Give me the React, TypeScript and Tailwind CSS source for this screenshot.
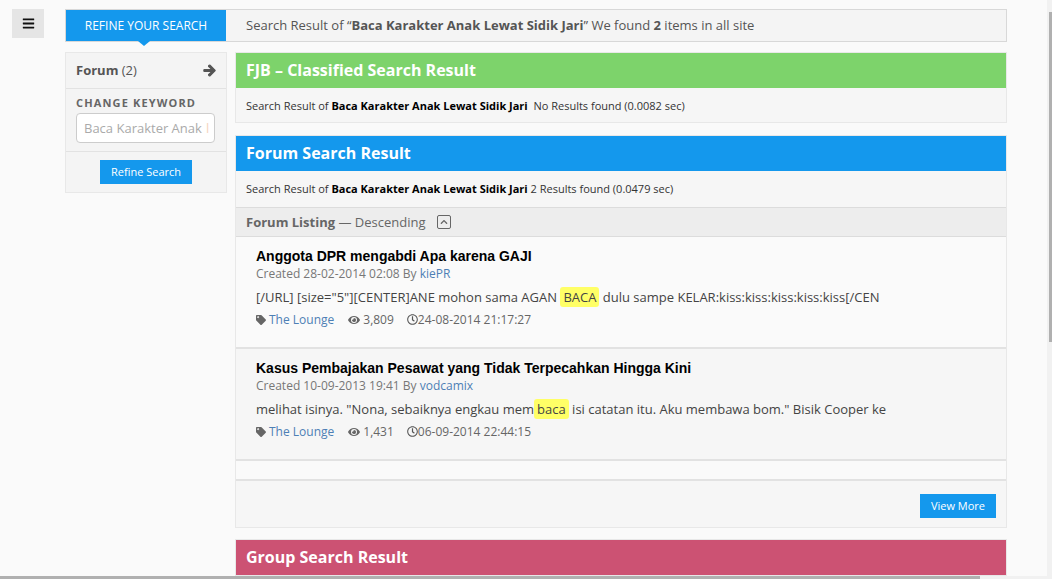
import React from 'react';
import { FaArrowRight, FaBars, FaChevronUp, FaEye, FaRegClock, FaTag } from 'react-icons/fa';

const Highlight = ({ children }: { children: React.ReactNode }) => (
  <span className="bg-[#ffff66] rounded-[3px] px-[3px] py-[1px]">{children}</span>
);

const SectionHead = ({ color, title }: { color: string; title: string }) => (
  <div className={`${color} h-[35px] flex items-center px-[10px] pb-[2px] text-white text-[16px] font-bold`}>{title}</div>
);

const Post = ({
  title,
  created,
  author,
  excerpt,
  views,
  date,
  bg,
}: {
  title: string;
  created: string;
  author: string;
  excerpt: React.ReactNode;
  views: string;
  date: string;
  bg: string;
}) => (
  <div className={`${bg} h-[112px] border-b-2 border-[#e2e2e2] pl-[20px] pt-[11px]`}>
    <div className="font-['Liberation_Sans',sans-serif] font-bold text-[14px] leading-[16px] text-black">{title}</div>
    <div className="text-[12px] leading-[17px] text-[#777] mt-[1px]">
      Created {created} By <span className="text-[#4d7fb5]">{author}</span>
    </div>
    <div className="text-[13px] leading-[18px] text-[#444] mt-[6px] whitespace-nowrap">{excerpt}</div>
    <div className="flex items-center text-[12px] leading-[17px] text-[#666] mt-[5px]">
      <FaTag className="text-[10px] text-[#666] mr-[3px]" />
      <span className="text-[#4d7fb5] mr-[14px]">The Lounge</span>
      <FaEye className="text-[12px] text-[#666] mr-[3px]" />
      <span className="mr-[13px]">{views}</span>
      <FaRegClock className="text-[11px] text-[#555]" />
      <span>{date}</span>
    </div>
  </div>
);

export default function App() {
  return (
    <div className="relative h-[579px] w-[1052px] overflow-hidden bg-[#fafafa] font-['Open_Sans',sans-serif]">
      <div className="flex pt-[9px]">
        <div className="w-[65px] shrink-0 pl-[12px]">
          <button className="w-[32px] h-[29px] bg-[#e5e5e5] flex items-center justify-center text-[#111]">
            <FaBars className="text-[13px]" />
          </button>
        </div>

        <div className="w-[942px] shrink-0">
          <div className="h-[33px] border border-[#d8d8d8] bg-[#f4f4f4] flex items-center">
            <div className="relative w-[160px] h-full bg-[#1498ed] flex items-center justify-center text-white text-[12px]">
              REFINE YOUR SEARCH
              <div className="absolute left-[72px] top-full w-0 h-0 border-x-[6px] border-x-transparent border-t-[5px] border-t-[#1498ed]" />
            </div>
            <div className="pl-[20px] text-[13px] text-[#555]">
              Search Result of “<b>Baca Karakter Anak Lewat Sidik Jari</b>” We found <b>2</b> items in all site
            </div>
          </div>

          <div className="flex gap-[8px] mt-[10px]">
            <aside className="w-[162px] h-[141px] shrink-0 border border-[#e8e8e8] bg-[#f4f4f4]">
              <div className="h-[36px] flex items-center justify-between px-[10px] border-b border-[#e2e2e2] text-[13px] text-[#555]">
                <span>
                  <b>Forum</b> (2)
                </span>
                <FaArrowRight className="text-[13px] text-[#555] stroke-[40] stroke-[#555]" />
              </div>
              <div className="h-[63px] border-b border-[#e2e2e2] px-[10px] pt-[7px]">
                <div className="text-[11px] leading-[13px] font-bold tracking-[1.15px] text-[#666]">CHANGE KEYWORD</div>
                <div className="mt-[4px] h-[30px] w-[139px] bg-white border border-[#ccc] rounded-[4px] pl-[7px] pt-[1px] flex items-center overflow-hidden whitespace-nowrap text-[13px] text-[#aaa]">
                  Baca Karakter Anak <span className="text-[#f5d5c0] ml-[4px]">l</span>
                </div>
              </div>
              <div className="flex justify-center pt-[8px]">
                <button className="w-[92px] h-[24px] bg-[#1498ed] text-white text-[11px]">Refine Search</button>
              </div>
            </aside>

            <main className="w-[772px] shrink-0">
              <section className="border border-[#e8e8e8] bg-[#f6f6f6] h-[71px]">
                <SectionHead color="bg-[#7dd36b]" title="FJB – Classified Search Result" />
                <div className="pl-[10px] pt-[10px] text-[11px] leading-[16px] text-[#333]">
                  Search Result of <b className="text-black">Baca Karakter Anak Lewat Sidik Jari</b>&nbsp; No Results found (0.0082 sec)
                </div>
              </section>

              <section className="border border-[#e8e8e8] bg-[#f6f6f6] mt-[12px] h-[393px]">
                <SectionHead color="bg-[#1498ed]" title="Forum Search Result" />
                <div className="h-[36px] pl-[10px] pt-[10px] text-[11px] leading-[16px] text-[#333]">
                  Search Result of <b className="text-black">Baca Karakter Anak Lewat Sidik Jari</b> 2 Results found (0.0479 sec)
                </div>
                <div className="h-[30px] bg-[#ededed] border-y border-[#dcdcdc] flex items-center pl-[10px] pt-[1px] text-[13px] text-[#666]">
                  <b>Forum Listing</b>&nbsp;— Descending
                  <span className="ml-[11px] mb-[2px] w-[14px] h-[14px] border border-[#666] rounded-[2px] flex items-center justify-center">
                    <FaChevronUp className="text-[8px] text-[#666]" />
                  </span>
                </div>
                <Post
                  bg="bg-[#fafafa]"
                  title="Anggota DPR mengabdi Apa karena GAJI"
                  created="28-02-2014 02:08"
                  author="kiePR"
                  excerpt={
                    <>
                      [/URL] [size="5"][CENTER]ANE mohon sama AGAN <Highlight>BACA</Highlight> dulu sampe KELAR:kiss:kiss:kiss:kiss:kiss[/CEN
                    </>
                  }
                  views="3,809"
                  date="24-08-2014 21:17:27"
                />
                <Post
                  bg="bg-[#f6f6f6]"
                  title="Kasus Pembajakan Pesawat yang Tidak Terpecahkan Hingga Kini"
                  created="10-09-2013 19:41"
                  author="vodcamix"
                  excerpt={
                    <>
                      melihat isinya. "Nona, sebaiknya engkau mem<Highlight>baca</Highlight> isi catatan itu. Aku membawa bom." Bisik Cooper ke
                    </>
                  }
                  views="1,431"
                  date="06-09-2014 22:44:15"
                />
                <div className="h-[20px] bg-[#fafafa] border-b-2 border-[#e2e2e2]" />
                <div className="flex justify-end pt-[13px] pr-[10px]">
                  <button className="w-[76px] h-[24px] bg-[#1498ed] text-white text-[11px]">View More</button>
                </div>
              </section>

              <section className="mt-[11px] border border-[#e8e8e8]">
                <SectionHead color="bg-[#cc5273]" title="Group Search Result" />
              </section>
            </main>
          </div>
        </div>
      </div>

      <div className="absolute right-0 top-0 h-full w-[5px] bg-[#f1f1f1]">
        <div className="absolute right-0 top-[12px] h-[330px] w-[3px] bg-[#b0b0b0]" />
      </div>
      <div className="absolute left-0 bottom-0 h-[3px] w-full bg-[#f1f1f1]">
        <div className="h-full w-[980px] bg-[#b0b0b0]" />
      </div>
    </div>
  );
}
